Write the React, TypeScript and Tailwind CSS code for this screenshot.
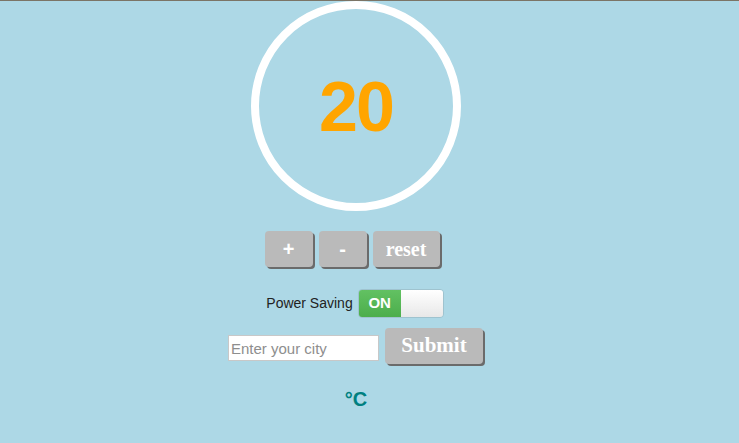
import React from 'react';

const btn =
  'h-[36px] rounded-[4px] bg-[#bababa] text-white font-bold shadow-[2px_2px_0_#6b6b6b] flex items-center justify-center';

export default function App() {
  return (
    <div className="w-[739px] h-[443px] bg-[#add8e6] border-t border-[#7b7466] overflow-hidden font-['Liberation_Sans',Arial,sans-serif]">
      <div className="w-[712px] flex flex-col items-center">
        {/* Thermostat dial */}
        <div className="w-[210px] h-[210px] rounded-full border-[8px] border-white flex items-center justify-center">
          <span className="text-[70px] font-bold text-[#ffa500] tracking-[-2px] leading-none mt-[2px]">20</span>
        </div>

        {/* Controls */}
        <div className="mt-[20px] flex gap-[6px] ml-[-8px]">
          <button className={`${btn} w-[48px] text-[20px]`}>+</button>
          <button className={`${btn} w-[48px] text-[20px]`}>-</button>
          <button className={`${btn} w-[67px] text-[20px] font-['Liberation_Serif',serif]`}>reset</button>
        </div>

        {/* Power saving */}
        <div className="mt-[22px] flex items-center gap-[5px] ml-[-2px]">
          <span className="text-[14px] text-[#222]">Power Saving</span>
          <div className="w-[86px] h-[29px] rounded-[4px] border border-[#9fc3cf] flex overflow-hidden">
            <div className="w-[42px] bg-gradient-to-b from-[#62c162] to-[#4cae4c] text-white text-[15px] font-bold flex items-center justify-center">
              ON
            </div>
            <div className="flex-1 bg-gradient-to-b from-white to-[#e8e8e8]" />
          </div>
        </div>

        {/* City */}
        <div className="mt-[10px] flex items-center gap-[6px] ml-[-1px]">
          <input
            placeholder="Enter your city"
            className="w-[151px] h-[26px] bg-white border border-[#c8c8c8] px-[2px] text-[15px] text-[#333] placeholder:text-[#8e8e8e] outline-none mt-[4px]"
          />
          <button className={`${btn} w-[98px] text-[21px] font-['Liberation_Serif',serif]`}>Submit</button>
        </div>

        <div className="mt-[20px] text-[20px] font-bold text-[#008080]">°C</div>
      </div>
    </div>
  );
}
